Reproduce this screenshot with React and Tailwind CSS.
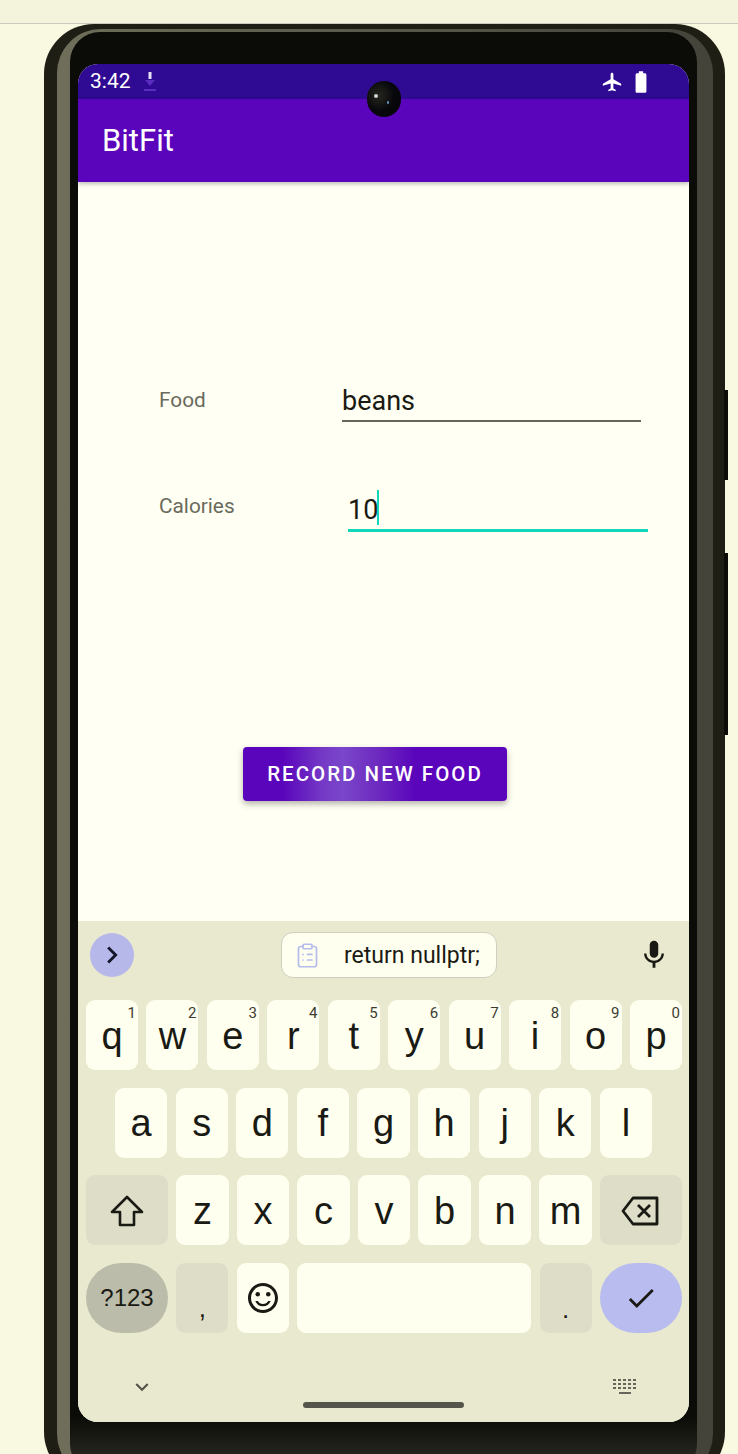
import React from "react";
import { MdAirplanemodeActive, MdBatteryFull, MdMic, MdCheck, MdOutlineSentimentSatisfied, MdKeyboardArrowDown, MdKeyboardArrowRight } from "react-icons/md";
import { ClipboardList } from "lucide-react";

const sans = "font-['Liberation_Sans',Arial,sans-serif]";
const Key = ({ children, sup, className = "bg-[#fffff0]" }) => (
  <div className={`relative h-[70px] rounded-[9px] flex items-center justify-center text-[38px] leading-none text-[#1a1a14] ${sans} ${className}`}>
    <span className="mt-[1px]">{children}</span>
    {sup && <span className="absolute right-[2px] top-[5px] text-[15px] leading-[17px] text-[#3c3c30] font-['Roboto',sans-serif]">{sup}</span>}
  </div>
);

const Row1 = [["q","1"],["w","2"],["e","3"],["r","4"],["t","5"],["y","6"],["u","7"],["i","8"],["o","9"],["p","0"]];
const Row2 = "asdfghjkl".split("");
const Row3 = "zxcvbnm".split("");

export default function App() {
  return (
    <div className="relative h-[1454px] w-[738px] overflow-hidden bg-[#f9f9e2] font-['Roboto',sans-serif]">
      <div className="h-[24px] bg-[#f4f4dc] border-b border-[#c9c9c2]" />
      <div className="relative ml-[44px] w-[681px]">
        <div className="absolute left-[680px] top-[366px] w-[4px] h-[90px] bg-[#0c0c08]" />
        <div className="absolute left-[680px] top-[529px] w-[4px] h-[182px] bg-[#0c0c08]" />
        <div className="rounded-[50px] bg-[#1e1e15] pt-[5px] pl-[13px] pr-[12px] pb-[4px]">
          <div className="rounded-[44px] bg-[linear-gradient(90deg,#6e6e5a,#43433a)] pt-[3px] pl-[13px] pr-[16px] pb-[4px]">
            <div className="rounded-[30px] bg-[linear-gradient(180deg,#0b0b07_96%,#33332c)] pt-[32px] px-[8px] pb-[52px]">
              <div className="relative h-[1358px] rounded-[20px] overflow-hidden bg-[#fffff4] flex flex-col">
                <div className="h-[35px] bg-[#2f0a92] flex items-center pl-[12px] pr-[35px] text-white text-[21px]">
                  <span>3:42</span>
                  <svg className="ml-[10px]" width="18" height="22" viewBox="0 0 18 22" fill="#5a2cc0"><rect x="7.5" y="1" width="3" height="7" fill="#e8e2f4"/><path d="M4 9h10l-5 6z"/><rect x="3" y="18" width="12" height="2"/></svg>
                  <div className="flex-1" />
                  <MdAirplanemodeActive className="text-white" size={22} />
                  <MdBatteryFull className="ml-[5px] text-white" size={26} />
                </div>
                <div className="h-[83px] bg-[#5a05bb] shadow-[0_2px_4px_rgba(0,0,0,0.25)] z-10 flex items-center pl-[24px] pt-[2px] text-white text-[31px]">BitFit</div>
                <div className="flex-1 flex flex-col">
                  <div className="ml-[81px] mt-[200px] flex items-start">
                    <div className="w-[183px] pt-[5px] text-[20.8px] leading-[26px] text-[#6a6a5c]">Food</div>
                    <div className="w-[299px] h-[40px] border-b-2 border-[#66665c] text-[27px] leading-[38px] text-[#1a1a12]">beans</div>
                  </div>
                  <div className="ml-[81px] mt-[64px] flex items-start">
                    <div className="w-[189px] pt-[7px] text-[20.8px] leading-[26px] text-[#6a6a5c]">Calories</div>
                    <div className="w-[300px] h-[46px] border-b-[3px] border-[#10d8b8] flex items-start text-[27px] leading-[38px] text-[#1a1a12] pt-[5px]">
                      10<span className="-ml-[1px] -mt-[1px] w-[2px] h-[35px] bg-[#10d8b8]" />
                    </div>
                  </div>
                  <div className="mt-[215px] ml-[165px] w-[264px] h-[54px] rounded-[4px] bg-[linear-gradient(90deg,#5a05bb_15%,#7439c6_30%,#7a46ca_38%,#6c28be_52%,#5a05bb_65%)] shadow-[0_3px_6px_rgba(0,0,0,0.3)] flex items-center justify-center text-white text-[20.5px] font-medium tracking-[2px]">RECORD NEW FOOD</div>
                </div>
                <div className="h-[501px] bg-[#e9e9cf] flex flex-col pl-[8px] pr-[7px]">
                  <div className="h-[79px] relative flex items-start pt-[12px]">
                    <div className="ml-[4px] w-[44px] h-[44px] rounded-full bg-[#b6b8ea] flex items-center justify-center text-[#14142a]"><MdKeyboardArrowRight size={34} /></div>
                    <div className="ml-[147px] -mt-[1px] w-[216px] h-[46px] rounded-[12px] bg-[#fffff0] border border-[#cfcfc0] flex items-center pl-[12px] pt-[3px] text-[23px] text-[#1a1a14]">
                      <ClipboardList size={27} strokeWidth={1.5} className="text-[#b4bcec] -mt-[3px]" />
                      <span className="ml-[23px]">return nullptr;</span>
                    </div>
                    <MdMic size={34} className="ml-[140px] mt-[5px] text-[#1a1a14]" />
                  </div>
                  <div className="grid grid-cols-10 gap-x-[8.4px]">
                    {Row1.map(([k, s]) => <Key key={k} sup={s}>{k}</Key>)}
                  </div>
                  <div className="mt-[17.6px] pl-[29px] pr-[30px] grid grid-cols-9 gap-x-[8.4px]">
                    {Row2.map((k) => <Key key={k}>{k}</Key>)}
                  </div>
                  <div className="mt-[17.6px] flex gap-x-[8.4px]">
                    <Key className="w-[82px] bg-[#dedec8]">
                      <svg width="36" height="36" viewBox="0 0 36 36" fill="none" stroke="#1a1a14" strokeWidth="2.6" strokeLinejoin="round"><path d="M18 4 L33 19 H25 V32 H11 V19 H3 Z"/></svg>
                    </Key>
                    {Row3.map((k) => <div key={k} className="flex-1"><Key>{k}</Key></div>)}
                    <Key className="w-[82px] bg-[#dedec8]">
                      <svg width="40" height="34" viewBox="0 0 40 34" fill="none" stroke="#1a1a14" strokeWidth="2.8" strokeLinejoin="round"><path d="M12 4 H36 V30 H12 L2 17 Z"/><path d="M17 11 L29 23 M29 11 L17 23"/></svg>
                    </Key>
                  </div>
                  <div className="mt-[17.6px] flex gap-x-[8.4px]">
                    <div className="w-[82px] h-[70px] rounded-[35px] bg-[#bcbcaa] flex items-center justify-center text-[24px] text-[#1a1a14] font-['Liberation_Sans',sans-serif]">?123</div>
                    <div className="w-[52px] h-[70px] rounded-[9px] bg-[#dedec8] flex items-end justify-center pb-[12px] text-[26px] leading-none text-[#1a1a14] font-['Liberation_Sans',sans-serif]">,</div>
                    <div className="w-[52px] h-[70px] rounded-[9px] bg-[#fffff0] flex items-center justify-center"><MdOutlineSentimentSatisfied size={36} className="text-[#1a1a14]" /></div>
                    <div className="flex-1 h-[70px] rounded-[9px] bg-[#fffff0]" />
                    <div className="w-[52px] h-[70px] rounded-[9px] bg-[#dedec8] flex items-end justify-center pb-[11px] text-[26px] leading-none text-[#1a1a14] font-['Liberation_Sans',sans-serif]">.</div>
                    <div className="w-[82px] h-[70px] rounded-[35px] bg-[#b8bcee] flex items-center justify-center"><MdCheck size={34} className="text-[#1a1a14]" /></div>
                  </div>
                  <div className="flex-1 relative">
                    <MdKeyboardArrowDown size={26} className="absolute left-[43px] top-[41px] text-[#55554c]" />
                    <svg width="24" height="16" viewBox="0 0 24 16" fill="#66665c" className="absolute left-[527px] top-[46px]">
                      <path d="M0 0h3v2H0zM5 0h3v2H5zM10 0h3v2h-3zM15 0h3v2h-3zM20 0h3v2h-3zM0 4h3v2H0zM5 4h3v2H5zM10 4h3v2h-3zM15 4h3v2h-3zM20 4h3v2h-3zM0 8h3v2H0zM5 8h3v2H5zM10 8h3v2h-3zM15 8h3v2h-3zM20 8h3v2h-3zM6 13h12v2H6z"/>
                    </svg>
                    <div className="absolute left-[217px] top-[69px] w-[161px] h-[6px] rounded-full bg-[#55554c]" />
                  </div>
                </div>
              </div>
            </div>
          </div>
        </div>
        <div className="absolute left-[323px] top-[57px] w-[34px] h-[36px] rounded-full bg-[radial-gradient(circle_at_35%_40%,#26261e,#08080c_50%,#040406)] z-20">
          <div className="absolute left-[7px] top-[13px] w-[4px] h-[4px] rounded-full bg-[#cfd6d8]" />
          <div className="absolute left-[20px] top-[20px] w-[2px] h-[3px] rounded-full bg-[#5c90b8]" />
        </div>
      </div>
    </div>
  );
}
